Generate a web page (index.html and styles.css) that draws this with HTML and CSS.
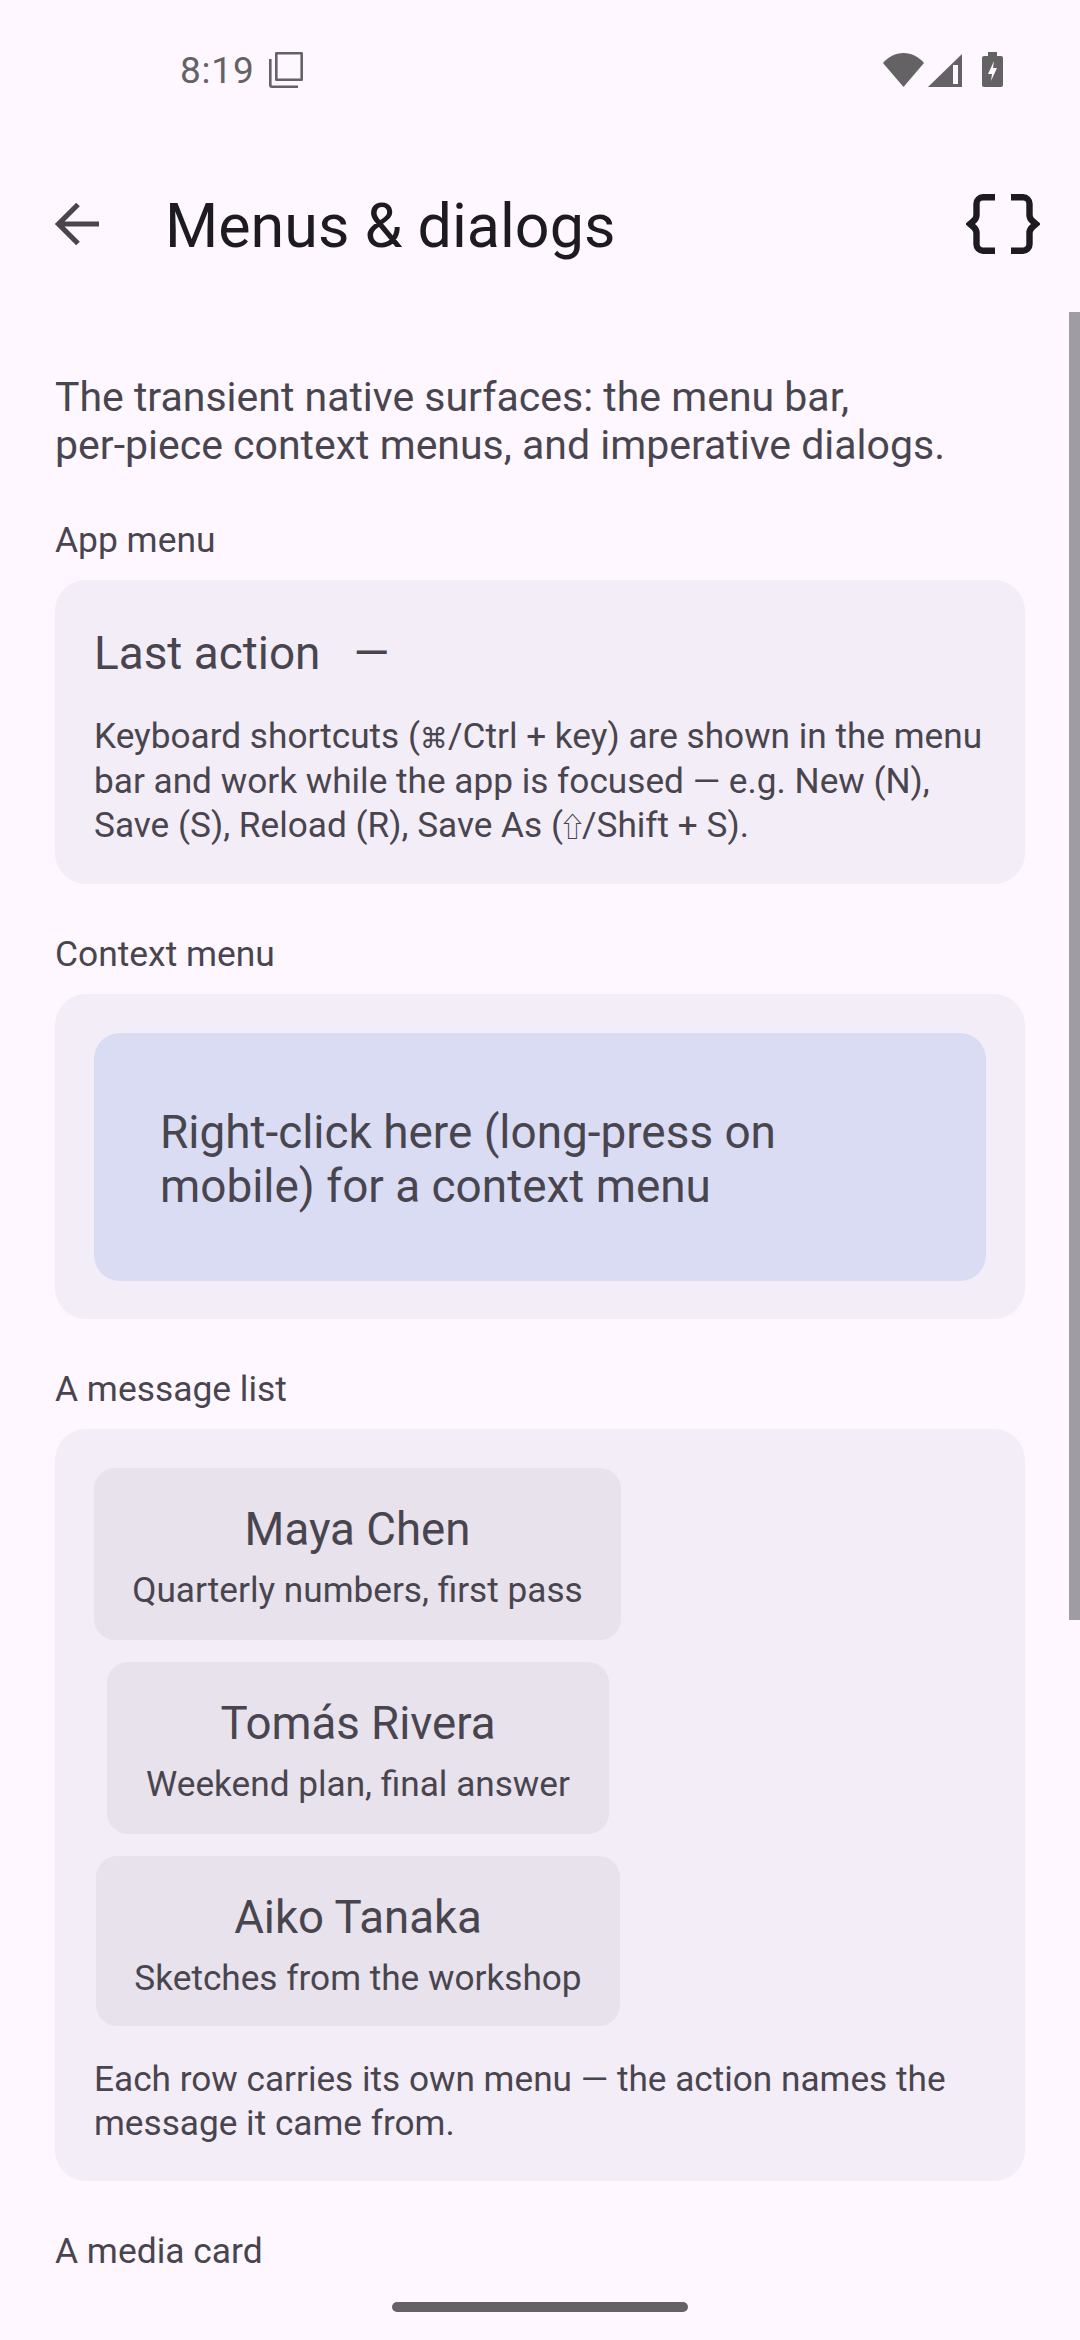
FILE: index.html
```html
<!DOCTYPE html>
<html lang="en">
<head>
<meta charset="utf-8">
<title>Menus &amp; dialogs</title>
<link rel="stylesheet" href="styles.css">
</head>
<body>
<div class="screen">
  <div class="status">
    <div class="status-left">
      <span class="time">8:19</span>
      <svg class="copy-ic" viewBox="0 0 34 36" width="34" height="36"><path d="M7.300 1.300h25.400v26.400H7.300z" fill="none" stroke="#656266" stroke-width="2.600" stroke-linejoin="round"/><path d="M1.300 7v26a1.700 1.700 0 0 0 1.700 1.700h26" fill="none" stroke="#656266" stroke-width="2.600"/></svg>
    </div>
    <div class="status-right">
      <svg width="41" height="34" viewBox="0 0 41 34"><path d="M0 10C5 4 12.500 0 20.500 0S36 4 41 10L20.500 34z" fill="#656266"/></svg>
      <svg class="sig" width="34" height="33" viewBox="0 0 34 33"><path d="M34 0v33H0z" fill="#656266"/><rect x="25" y="11" width="5" height="19" fill="#fef7ff"/></svg>
      <svg class="bat" width="21" height="35" viewBox="0 0 21 35"><path d="M6 0h9v4h4a2 2 0 0 1 2 2v27a2 2 0 0 1-2 2H2a2 2 0 0 1-2-2V6a2 2 0 0 1 2-2h4z" fill="#656266"/><path d="M12 9l-6 13h4l-1 7 6-13h-4z" fill="#fef7ff"/></svg>
    </div>
  </div>
  <header class="appbar">
    <svg class="back" width="46" height="46" viewBox="0 0 46 46"><path d="M45 23H5M24 3.500L4.500 23 24 42.500" fill="none" stroke="#49454f" stroke-width="5.200"/></svg>
    <h1 class="title">Menus &amp; dialogs</h1>
    <svg class="braces" width="74" height="60" viewBox="0 0 74 60"><path d="M29 3.300H17a6.500 6.500 0 0 0-6.500 6.500V21q0 3.500-3 6L4 30l3.500 3q3 2.500 3 6v11.200a6.500 6.500 0 0 0 6.500 6.500h12M45 3.300h12a6.500 6.500 0 0 1 6.500 6.500V21q0 3.500 3 6l3.500 3-3.500 3q-3 2.500-3 6v11.200a6.500 6.500 0 0 1-6.500 6.500H45" fill="none" stroke="#1d1b20" stroke-width="6.400"/></svg>
  </header>
  <main class="content">
    <p class="intro">The transient native surfaces: the menu bar, <span class="nowrap">per-piece</span> context menus, and imperative dialogs.</p>
    <h2 class="label">App menu</h2>
    <section class="card app">
      <div class="last"><span>Last action</span><span>—</span></div>
      <p class="note">Keyboard shortcuts (<span class="cmd">⌘</span>/Ctrl + key) are shown in the menu bar and work while the app is focused — e.g. New (N), Save (S), Reload (R), Save As (<span class="shift">⇧</span>/Shift + S).</p>
    </section>
    <h2 class="label">Context menu</h2>
    <section class="card">
      <div class="target">Right-click here (long-press on mobile) for a context menu</div>
    </section>
    <h2 class="label">A message list</h2>
    <section class="card list">
      <div class="msg"><div class="name">Maya Chen</div><div class="sub">Quarterly numbers, first pass</div></div>
      <div class="msg"><div class="name">Tomás Rivera</div><div class="sub">Weekend plan, final answer</div></div>
      <div class="msg"><div class="name">Aiko Tanaka</div><div class="sub">Sketches from the workshop</div></div>
      <p class="note">Each row carries its own menu — the action names the message it came from.</p>
    </section>
    <h2 class="label">A media card</h2>
  </main>
  <div class="scrollbar"></div>
  <div class="home"></div>
</div>
</body>
</html>
```
FILE: styles.css
```css
* { box-sizing: border-box; }
html, body { margin: 0; padding: 0; }
body { font-family: Roboto, sans-serif; background: #fef7ff; }
.screen { position: relative; width: 1080px; height: 2340px; overflow: hidden; background: #fef7ff; color: #49454f; display: flex; flex-direction: column; }
.status { height: 176px; flex: none; display: flex; justify-content: space-between; align-items: flex-start; padding: 48px 77px 0 180px; }
.status-left { display: flex; align-items: center; gap: 14px; height: 44px; }
.time { font-size: 37px; color: #656266; letter-spacing: 0.8px; }
.status-right { display: flex; align-items: flex-start; padding-top: 5px; }
.sig { margin-left: 4px; margin-top: 1px; }
.bat { margin-left: 20px; margin-top: -1px; }
.appbar { height: 96px; flex: none; display: flex; align-items: center; padding: 0 40px 0 54px; }
.back { flex: none; }
.title { flex: 1; margin: 0 0 0 65px; padding-top: 3px; font-size: 61px; font-weight: 400; color: #1d1b20; line-height: 96px; }
.nowrap { white-space: nowrap; }
.content { flex: 1; padding: 101px 55px 0; overflow: hidden; }
.intro { margin: 0 0 50px; font-size: 41px; line-height: 48px; width: 960px; }
.label { margin: 0 0 19px; font-size: 35.400px; font-weight: 400; line-height: 42px; }
.card { background: #f3edf7; border-radius: 31px; padding: 39px 39px 38px; margin-bottom: 49px; }
.app { padding-bottom: 36px; }
.last { display: flex; gap: 33px; font-size: 45.900px; line-height: 52px; margin: 8px 0 35px; }
.note { margin: 0; font-size: 35.200px; line-height: 44.600px; }
.cmd { font-family: "DejaVu Sans", sans-serif; font-size: 28px; line-height: 1; }
.shift { font-family: "Noto Sans CJK SC", sans-serif; font-size: 27px; line-height: 1; margin: 0 -4px; }
.target { background: #d9dcf2; border-radius: 26px; padding: 72px 180px 67px 66px; font-size: 45.900px; line-height: 54px; height: 248px; }
.list { display: flex; flex-direction: column; align-items: stretch; padding-bottom: 35px; }
.msg { align-self: flex-start; width: 527px; height: 172px; background: #e7e2ec; border-radius: 21px; text-align: center; padding-top: 36px; margin-bottom: 22px; }
.msg:nth-child(2) { width: 502px; margin-left: 13px; }
.msg:nth-child(3) { width: 524px; margin-left: 2px; height: 170px; margin-bottom: 31px; }
.name { font-size: 45.600px; line-height: 52px; }
.sub { font-size: 35.200px; line-height: 42px; margin-top: 13px; }
.scrollbar { position: absolute; right: 0; top: 312px; width: 11px; height: 1308px; background: #a09ca3; }
.home { position: absolute; left: 392px; top: 2302px; width: 296px; height: 10px; border-radius: 5px; background: #656266; }
```
